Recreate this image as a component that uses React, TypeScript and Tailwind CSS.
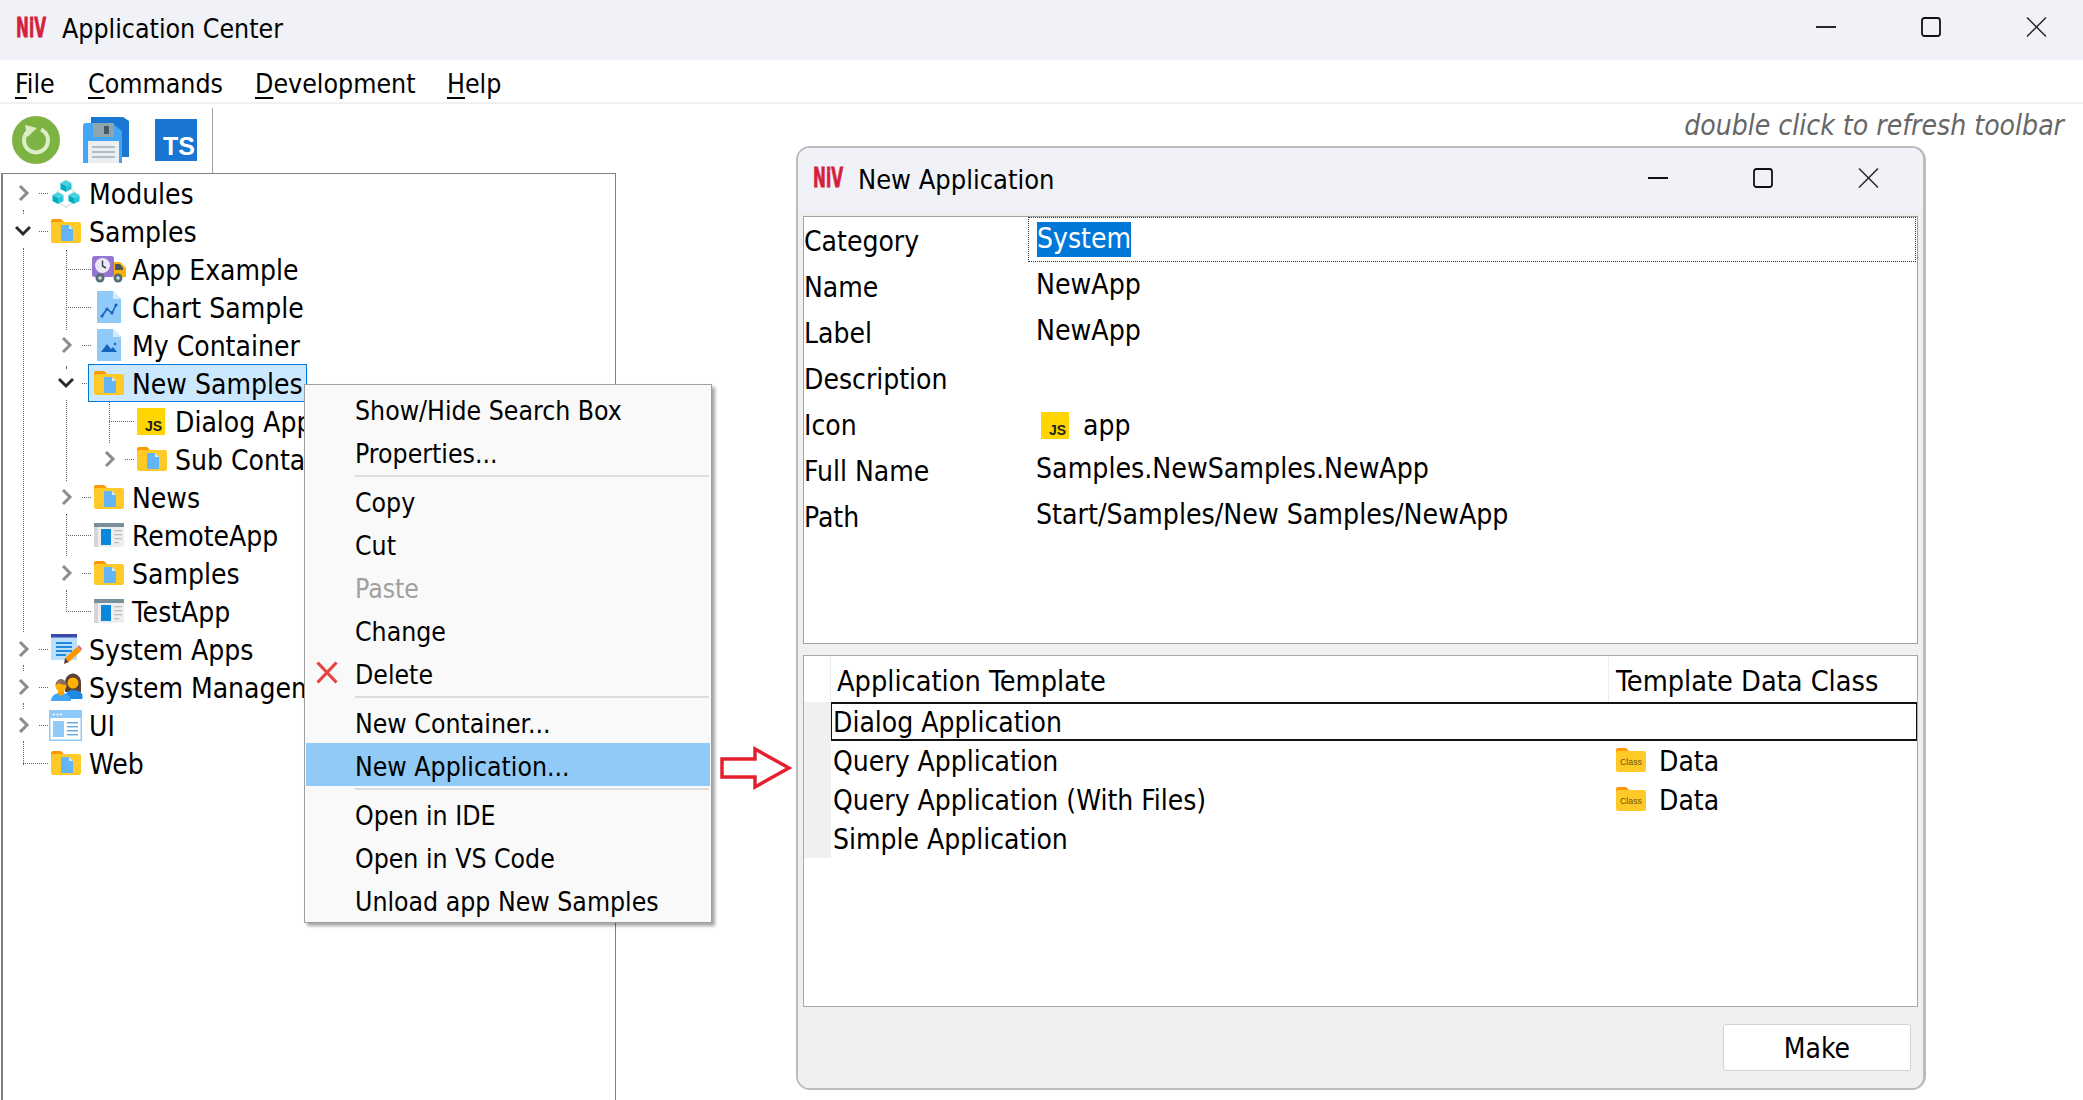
import React from "react";

const Chevron = ({ open }: { open?: boolean }) => (
  <svg width="16" height="16" viewBox="0 0 16 16" className="block shrink-0">
    {open ? (
      <polyline points="1,4 8,11 15,4" fill="none" stroke="#2b2b2b" strokeWidth="3" />
    ) : (
      <polyline points="5,1 12,8 5,15" fill="none" stroke="#8c8c8c" strokeWidth="3" />
    )}
  </svg>
);

const Folder = () => (
  <svg width="30" height="24" viewBox="0 0 30 24" className="block shrink-0">
    <path d="M0 2a2 2 0 0 1 2-2h8l3 3v6H0z" fill="#ff9800" />
    <rect x="0" y="3" width="30" height="21" rx="2" fill="#ffca28" />
    <path d="M10 6h8l4 4v12H10z" fill="#64b5f6" />
    <path d="M18 6l4 4h-4z" fill="#d6ecfd" />
  </svg>
);

const ClassFolder = () => (
  <svg width="30" height="24" viewBox="0 0 30 24" className="block shrink-0 overflow-visible -mt-[2px]">
    <path d="M0 2a2 2 0 0 1 2-2h8l3 3v6H0z" fill="#ff9800" />
    <rect x="0" y="3" width="30" height="21" rx="2" fill="#ffca28" />
    <text x="4" y="17" fontSize="9" fill="#6d5410" fontFamily="'Liberation Sans',sans-serif" textLength="22" lengthAdjust="spacingAndGlyphs">Class</text>
  </svg>
);

const Cube = ({ x, y }: { x: number; y: number }) => (
  <g transform={`translate(${x} ${y})`}>
    <polygon points="0,-6 5.5,-3 0,0 -5.5,-3" fill="#4dd0e1" />
    <polygon points="-5.5,-3 0,0 0,6 -5.5,3" fill="#00acc1" />
    <polygon points="5.5,-3 0,0 0,6 5.5,3" fill="#26c6da" />
  </g>
);

const Modules = () => (
  <svg width="30" height="29" viewBox="0 0 30 29" className="block shrink-0">
    <polygon points="15,7 24,13 24,22 15,28 6,22 6,13" fill="none" stroke="#dfe3e6" strokeWidth="1.5" />
    <Cube x={15} y={7} />
    <Cube x={7} y={19} />
    <Cube x={23} y={19} />
  </svg>
);

const Truck = () => (
  <svg width="34" height="27" viewBox="0 0 34 27" className="block shrink-0">
    <rect x="0" y="0" width="22" height="21" rx="2.5" fill="#9575cd" />
    <circle cx="10.5" cy="9.5" r="7.5" fill="#ede7f6" />
    <polyline points="10.5,4.5 10.5,10 14,12" fill="none" stroke="#37474f" strokeWidth="1.5" />
    <path d="M22 6h6l6 6v9H22z" fill="#ffb300" />
    <path d="M23 8h5l3 4v2h-8z" fill="#455a64" />
    <circle cx="8" cy="22" r="4.5" fill="#546e7a" />
    <circle cx="8" cy="22" r="1.8" fill="#cfd8dc" />
    <circle cx="26" cy="22" r="4.5" fill="#546e7a" />
    <circle cx="26" cy="22" r="1.8" fill="#cfd8dc" />
  </svg>
);

const DocBase = ({ children }: { children: React.ReactNode }) => (
  <svg width="24" height="32" viewBox="0 0 24 32" className="block shrink-0">
    <path d="M0 0h16l8 8v24H0z" fill="#90caf9" />
    <path d="M16 0l8 8h-8z" fill="#d6ecfd" />
    {children}
  </svg>
);

const ChartDoc = () => (
  <DocBase>
    <polyline points="5,25 10,18 15,22 19,14" fill="none" stroke="#1565c0" strokeWidth="1.6" />
    <circle cx="5" cy="25" r="1.6" fill="#1565c0" />
    <circle cx="10" cy="18" r="1.6" fill="#1565c0" />
    <circle cx="15" cy="22" r="1.6" fill="#1565c0" />
    <circle cx="19" cy="14" r="1.6" fill="#1565c0" />
  </DocBase>
);

const ImageDoc = () => (
  <DocBase>
    <polygon points="4,23 10,15 14,20 16,18 20,23" fill="#1565c0" />
    <circle cx="18" cy="15" r="1.3" fill="#1565c0" />
  </DocBase>
);

const AppWin = () => (
  <svg width="30" height="24" viewBox="0 0 30 24" className="block shrink-0">
    <rect x="0" y="0" width="30" height="24" rx="1" fill="#eeeeee" />
    <rect x="0" y="4" width="4" height="20" fill="#d6d6d6" />
    <rect x="0" y="0" width="30" height="4" fill="#78909c" />
    <rect x="7" y="6" width="10" height="16" fill="#0a86dc" />
    <rect x="20" y="7" width="8" height="1.3" fill="#bdbdbd" />
    <rect x="20" y="11" width="8" height="1.3" fill="#bdbdbd" />
    <rect x="20" y="15" width="8" height="1.3" fill="#bdbdbd" />
    <rect x="20" y="19" width="5" height="1.3" fill="#bdbdbd" />
  </svg>
);

const SysApps = () => (
  <svg width="31" height="30" viewBox="0 0 31 30" className="block shrink-0">
    <rect x="0" y="0" width="26" height="26" fill="#bbdefb" />
    <rect x="0" y="0" width="26" height="3.5" fill="#3949ab" />
    <rect x="5" y="8" width="16" height="2" fill="#1e88e5" />
    <rect x="5" y="12" width="16" height="2" fill="#1e88e5" />
    <rect x="5" y="16" width="16" height="2" fill="#1e88e5" />
    <rect x="5" y="20" width="10" height="2" fill="#1e88e5" />
    <polygon points="14,24 26,13 30,17 18,28" fill="#ff9800" />
    <polygon points="26,13 28,11 31,14.5 30,17" fill="#e57373" />
    <polygon points="14,24 18,28 13,30" fill="#5d4037" />
  </svg>
);

const People = () => (
  <svg width="32" height="28" viewBox="0 0 32 28" className="block shrink-0">
    <path d="M14 10c0-6 4-9.500 8-9.500s8 3.500 8 9.500v9H14z" fill="#5d4037" />
    <circle cx="22" cy="10" r="5.500" fill="#ffb300" />
    <path d="M14 24c0-4 4-7 8-7s9.500 2 9.500 6v3H14z" fill="#1e88e5" />
    <path d="M0 28c0-5 4-8 10-8s10 3 10 8z" fill="#42a5f5" />
    <path d="M7 17h6v4l-3 2-3-2z" fill="#ffa000" />
    <circle cx="10" cy="13" r="5.500" fill="#ffb300" />
    <path d="M4.500 12.500c0-4 3-6.500 5.500-6.500s5.500 2.500 5.500 6c-3 0-6-.5-8-2z" fill="#8d6e63" />
  </svg>
);

const UiWin = () => (
  <svg width="33" height="31" viewBox="0 0 33 31" className="block shrink-0">
    <rect x="0.75" y="0.75" width="31.5" height="29.5" fill="#ffffff" stroke="#90caf9" strokeWidth="1.5" />
    <rect x="1" y="1" width="31" height="7" fill="#90caf9" />
    <circle cx="5" cy="4.5" r="1" fill="#fff" />
    <circle cx="8.5" cy="4.5" r="1" fill="#fff" />
    <circle cx="12" cy="4.5" r="1" fill="#fff" />
    <rect x="4" y="11" width="11" height="16" fill="#90caf9" />
    <rect x="18" y="12" width="11" height="1.4" fill="#64a8e0" />
    <rect x="18" y="16" width="11" height="1.4" fill="#64a8e0" />
    <rect x="18" y="20" width="11" height="1.4" fill="#64a8e0" />
    <rect x="18" y="24" width="11" height="1.4" fill="#64a8e0" />
  </svg>
);

const JsBox = () => (
  <div className="w-[28px] h-[27px] shrink-0 bg-[#ffd600] flex items-end justify-end pr-[3px] pb-[1px] text-[14px] leading-[16px] font-bold text-[#212121] font-['Liberation_Sans',sans-serif]">
    JS
  </div>
);

const Logo = () => (
  <svg width="30" height="21" viewBox="0 0 30 21" className="block shrink-0 overflow-visible">
    <text transform="scale(0.57 1)" x="0" y="20" fontSize="27" fontWeight="700" fill="#d4213d" stroke="#d4213d" strokeWidth="0.8" fontFamily="'DejaVu Sans',sans-serif">NiV</text>
  </svg>
);

const WinControls = ({ className }: { className: string }) => (
  <div className={className}>
    <svg width="20" height="20" viewBox="0 0 20 20" className="block">
      <line x1="0" y1="10" x2="20" y2="10" stroke="#111" strokeWidth="1.8" />
    </svg>
    <svg width="20" height="20" viewBox="0 0 20 20" className="block">
      <rect x="1" y="1" width="18" height="18" rx="2.5" fill="none" stroke="#111" strokeWidth="1.8" />
    </svg>
    <svg width="21" height="20" viewBox="0 0 21 20" className="block">
      <line x1="1" y1="0.5" x2="20" y2="19.5" stroke="#222" strokeWidth="1.4" />
      <line x1="20" y1="0.5" x2="1" y2="19.5" stroke="#222" strokeWidth="1.4" />
    </svg>
  </div>
);

type RowProps = {
  level: 0 | 1 | 2;
  label: string;
  exp?: "open" | "closed";
  icon: React.ReactNode;
  selected?: boolean;
};

const Row = ({ level, label, exp, icon, selected }: RowProps) => (
  <div
    className={
      "h-[38px] flex items-center " +
      (level === 0 ? "pl-0" : level === 1 ? "pl-[43px]" : "pl-[86px]")
    }
  >
    {exp ? (
      <>
        <div className="w-[36px] pl-[12px] shrink-0">
          <Chevron open={exp === "open"} />
        </div>
        <div className="w-[9px] shrink-0 border-t border-dotted border-[#666]" />
      </>
    ) : (
      <>
        <div className="w-[20px] shrink-0" />
        <div className="w-[25px] shrink-0 border-t border-dotted border-[#666]" />
      </>
    )}
    <div
      className={
        "flex items-center h-[38px] whitespace-nowrap " +
        (selected
          ? "ml-[-3px] w-[219px] bg-[#cce8ff] border border-[#0078d7] pl-[2px]"
          : "")
      }
    >
      <div className="w-[41px] pl-[3px] shrink-0 flex items-center">{icon}</div>
      <span className="pt-[4px]">{label}</span>
    </div>
  </div>
);

const guides = [
  "left-[20px] top-[36px] h-[4px]",
  "left-[20px] top-[74px] h-[384px]",
  "left-[20px] top-[491px] h-[6px]",
  "left-[20px] top-[529px] h-[6px]",
  "left-[20px] top-[567px] h-[24px]",
  "left-[63px] top-[76px] h-[80px]",
  "left-[63px] top-[192px] h-[2px]",
  "left-[63px] top-[226px] h-[81px]",
  "left-[63px] top-[340px] h-[42px]",
  "left-[63px] top-[416px] h-[22px]",
  "left-[106px] top-[228px] h-[41px]",
];

const MenuItem = ({ children, active, muted, del, low }: { children: string; active?: boolean; muted?: boolean; del?: boolean; low?: boolean }) => (
  <div
    className={
      "h-[43px] mx-[1px] pl-[49px] flex items-center relative " +
      (active ? "bg-[#91c9f7] " : "") +
      (low ? "pt-[5px] " : "") +
      (muted ? "text-[#a0a0a0]" : "text-black")
    }
  >
    {del && (
      <svg width="22" height="23" viewBox="0 0 22 23" className="absolute left-[10px] top-[8px]">
        <line x1="1.5" y1="1.5" x2="20.5" y2="21.5" stroke="#e8423f" strokeWidth="3.2" />
        <line x1="20.5" y1="1.5" x2="1.5" y2="21.5" stroke="#e8423f" strokeWidth="3.2" />
      </svg>
    )}
    {children}
  </div>
);

const PropRow = ({ label, value }: { label: string; value?: React.ReactNode }) => (
  <div className="h-[46px] flex items-center">
    <div className="w-[224px] shrink-0 pt-[4px]">{label}</div>
    <div className="pl-[8px] pb-[3px] flex items-center text-[28.2px]">{value}</div>
  </div>
);

export default function App() {
  return (
    <div className="relative w-[2083px] h-[1100px] overflow-hidden bg-white text-black flex flex-col text-[28px] leading-[34px] font-['DejaVu_Sans_Condensed','DejaVu_Sans',sans-serif]">
      {/* Title bar */}
      <div className="h-[60px] shrink-0 bg-[#f1f2f7] flex items-center pl-[16px] pb-[6px] text-[26.5px]">
        <Logo />
        <span className="ml-[16px] pt-[3px]">Application Center</span>
        <WinControls className="ml-auto flex items-center gap-[85px] pr-[36px]" />
      </div>

      {/* Menu */}
      <div className="h-[44px] shrink-0 border-b-2 border-[#f0f0f0] flex items-center pl-[15px] pt-[5px] text-[26.5px]">
        <span className="w-[73px]"><span className="underline underline-offset-[4px]">F</span>ile</span>
        <span className="w-[167px]"><span className="underline underline-offset-[4px]">C</span>ommands</span>
        <span className="w-[192px]"><span className="underline underline-offset-[4px]">D</span>evelopment</span>
        <span><span className="underline underline-offset-[4px]">H</span>elp</span>
      </div>

      {/* Toolbar */}
      <div className="h-[69px] shrink-0 flex items-start relative">
        <div className="ml-[12px] mt-[12px] flex items-center gap-[23px] h-[48px]">
          <svg width="48" height="48" viewBox="0 0 48 48" className="block shrink-0">
            <circle cx="24" cy="24" r="24" fill="#7cb342" />
            <path d="M29 13.500a12 12 0 1 1-10 0" fill="none" stroke="#dcedc8" strokeWidth="4" />
            <polygon points="13,9 25,12 15.500,21" fill="#dcedc8" />
          </svg>
          <svg width="46" height="46" viewBox="0 0 46 46" className="block shrink-0">
            <path d="M8 0h32l6 4v36H8z" fill="#1976d2" />
            <path d="M3 6h26l10 8v32H0V9a3 3 0 0 1 3-3z" fill="#42a5f5" />
            <path d="M10 6h21v14H10z" fill="#90a4ae" />
            <rect x="21" y="9" width="5" height="8" fill="#455a64" />
            <rect x="5" y="24" width="31" height="22" fill="#eceff1" />
            <rect x="9" y="29" width="23" height="2" fill="#b0bec5" />
            <rect x="9" y="34" width="23" height="2" fill="#b0bec5" />
            <rect x="9" y="39" width="23" height="2" fill="#b0bec5" />
          </svg>
          <div className="w-[42px] h-[42px] shrink-0 ml-[3px] bg-[#1976d2] flex items-end justify-end pr-[2px] pb-[1px] text-white font-bold text-[25px] leading-[28px] font-['Liberation_Sans',sans-serif]">
            TS
          </div>
        </div>
        <div className="ml-[15px] mt-[4px] w-[1px] h-[65px] bg-[#a0a0a0]" />
        <div className="ml-auto mt-[5px] pr-[19px] italic text-[#666666] text-[28.1px]">double click to refresh toolbar</div>
      </div>

      {/* Tree */}
      <div className="relative ml-[1px] w-[615px] flex-1 border-t border-r border-[#808080] border-l-2">
        {guides.map((g) => (
          <div key={g} className={"absolute border-l border-dotted border-[#666] " + g} />
        ))}
        <Row level={0} label="Modules" exp="closed" icon={<Modules />} />
        <Row level={0} label="Samples" exp="open" icon={<Folder />} />
        <Row level={1} label="App Example" icon={<div className="-ml-[2px]"><Truck /></div>} />
        <Row level={1} label="Chart Sample" icon={<div className="ml-[3px]"><ChartDoc /></div>} />
        <Row level={1} label="My Container" exp="closed" icon={<div className="ml-[3px]"><ImageDoc /></div>} />
        <Row level={1} label="New Samples" exp="open" icon={<Folder />} selected />
        <Row level={2} label="Dialog Application" icon={<JsBox />} />
        <Row level={2} label="Sub Container" exp="closed" icon={<Folder />} />
        <Row level={1} label="News" exp="closed" icon={<Folder />} />
        <Row level={1} label="RemoteApp" icon={<AppWin />} />
        <Row level={1} label="Samples" exp="closed" icon={<Folder />} />
        <Row level={1} label="TestApp" icon={<AppWin />} />
        <Row level={0} label="System Apps" exp="closed" icon={<SysApps />} />
        <Row level={0} label="System Management" exp="closed" icon={<People />} />
        <Row level={0} label="UI" exp="closed" icon={<div className="-ml-[2px]"><UiWin /></div>} />
        <Row level={0} label="Web" icon={<Folder />} />
      </div>

      {/* Context menu */}
      <div className="absolute left-[304px] top-[384px] w-[408px] h-[539px] z-10 bg-[#f9f9f9] border border-[#a0a0a0] pt-[4px] shadow-[3px_3px_3px_rgba(0,0,0,0.35)] text-[26.4px]">
        <MenuItem>Show/Hide Search Box</MenuItem>
        <MenuItem>Properties...</MenuItem>
        <div className="h-[6px] ml-[50px] mr-[2px] border-t-2 border-[#dddddd]" />
        <MenuItem>Copy</MenuItem>
        <MenuItem>Cut</MenuItem>
        <MenuItem muted>Paste</MenuItem>
        <MenuItem>Change</MenuItem>
        <MenuItem del>Delete</MenuItem>
        <div className="h-[4px] ml-[50px] mr-[2px] border-t-2 border-[#dddddd]" />
        <MenuItem low>New Container...</MenuItem>
        <MenuItem low active>New Application...</MenuItem>
        <div className="h-[6px] ml-[50px] mr-[2px] pt-[2px]"><div className="border-t-2 border-[#dddddd]" /></div>
        <MenuItem low>Open in IDE</MenuItem>
        <MenuItem low>Open in VS Code</MenuItem>
        <MenuItem low>Unload app New Samples</MenuItem>
      </div>

      {/* Red arrow */}
      <svg width="72" height="44" viewBox="0 0 72 44" className="absolute left-[720px] top-[746px] z-10">
        <polygon points="2,13 35,13 35,3 69,22 35,41 35,31 2,31" fill="#ffffff" stroke="#e4202e" strokeWidth="3.5" />
      </svg>

      {/* Dialog */}
      <div className="absolute left-[796px] top-[146px] w-[1130px] h-[944px] z-20 rounded-[14px] overflow-hidden border-2 border-r-[3px] border-[#bcbcbc] flex flex-col">
        <div className="h-[63px] shrink-0 bg-[#f1f2f7] flex items-center pl-[15px]">
          <div className="-mt-[4px]"><Logo /></div>
          <span className="ml-[15px] text-[27px]">New Application</span>
          <WinControls className="ml-auto -mt-[4px] flex items-center gap-[85px] pr-[44px]" />
        </div>
        <div className="flex-1 bg-[#f0f0f0] pl-[5px] pr-[5px] pt-[5px] flex flex-col">
          {/* properties */}
          <div className="h-[428px] shrink-0 bg-white border border-[#a0a0a0]">
            <div className="h-[46px] flex items-start">
              <div className="w-[224px] shrink-0 h-[46px] flex items-center pt-[4px]">Category</div>
              <div className="flex-1 mr-[1px] h-[45px] border border-dotted border-[#333] pl-[8px] flex items-center pb-[1px]">
                <span className="bg-[#0078d7] text-white h-[35px] flex items-center">System</span>
              </div>
            </div>
            <PropRow label="Name" value="NewApp" />
            <PropRow label="Label" value="NewApp" />
            <PropRow label="Description" />
            <div className="h-[46px] flex items-center">
              <div className="w-[224px] shrink-0 pt-[4px]">Icon</div>
              <div className="pl-[13px] pt-[3px] flex items-center">
                <JsBox />
                <span className="ml-[14px]">app</span>
              </div>
            </div>
            <PropRow label="Full Name" value="Samples.NewSamples.NewApp" />
            <PropRow label="Path" value="Start/Samples/New Samples/NewApp" />
          </div>

          {/* templates */}
          <div className="h-[352px] shrink-0 mt-[11px] bg-white border border-[#a8a8a8]">
            <div className="h-[46px] flex text-[28.6px]">
              <div className="w-[27px] shrink-0 border-r border-[#eeeeee]" />
              <div className="w-[778px] shrink-0 pl-[6px] pt-[3px] border-r border-[#eeeeee] flex items-center">Application Template</div>
              <div className="pl-[7px] pt-[3px] flex items-center">Template Data Class</div>
            </div>
            <div className="h-[39px] flex">
              <div className="w-[27px] shrink-0 bg-[#f0f0f0]" />
              <div className="flex-1 border-2 border-r border-[#111] border-l pl-[1px] pt-[3px] flex items-center">Dialog Application</div>
            </div>
            <div className="h-[39px] flex">
              <div className="w-[27px] shrink-0 bg-[#f0f0f0]" />
              <div className="w-[785px] shrink-0 pl-[2px] pt-[2px] flex items-center">Query Application</div>
              <div className="flex items-center"><ClassFolder /><span className="ml-[13px] pt-[2px]">Data</span></div>
            </div>
            <div className="h-[39px] flex">
              <div className="w-[27px] shrink-0 bg-[#f0f0f0]" />
              <div className="w-[785px] shrink-0 pl-[2px] pt-[2px] flex items-center">Query Application (With Files)</div>
              <div className="flex items-center"><ClassFolder /><span className="ml-[13px] pt-[2px]">Data</span></div>
            </div>
            <div className="h-[39px] flex">
              <div className="w-[27px] shrink-0 bg-[#f0f0f0]" />
              <div className="pl-[2px] pt-[2px] flex items-center">Simple Application</div>
            </div>
          </div>

          <div className="flex justify-end mt-[17px] pr-[7px]">
            <div className="w-[188px] h-[47px] pt-[2px] bg-white border border-[#d2d2d2] rounded-[3px] flex items-center justify-center">Make</div>
          </div>
        </div>
      </div>
    </div>
  );
}
